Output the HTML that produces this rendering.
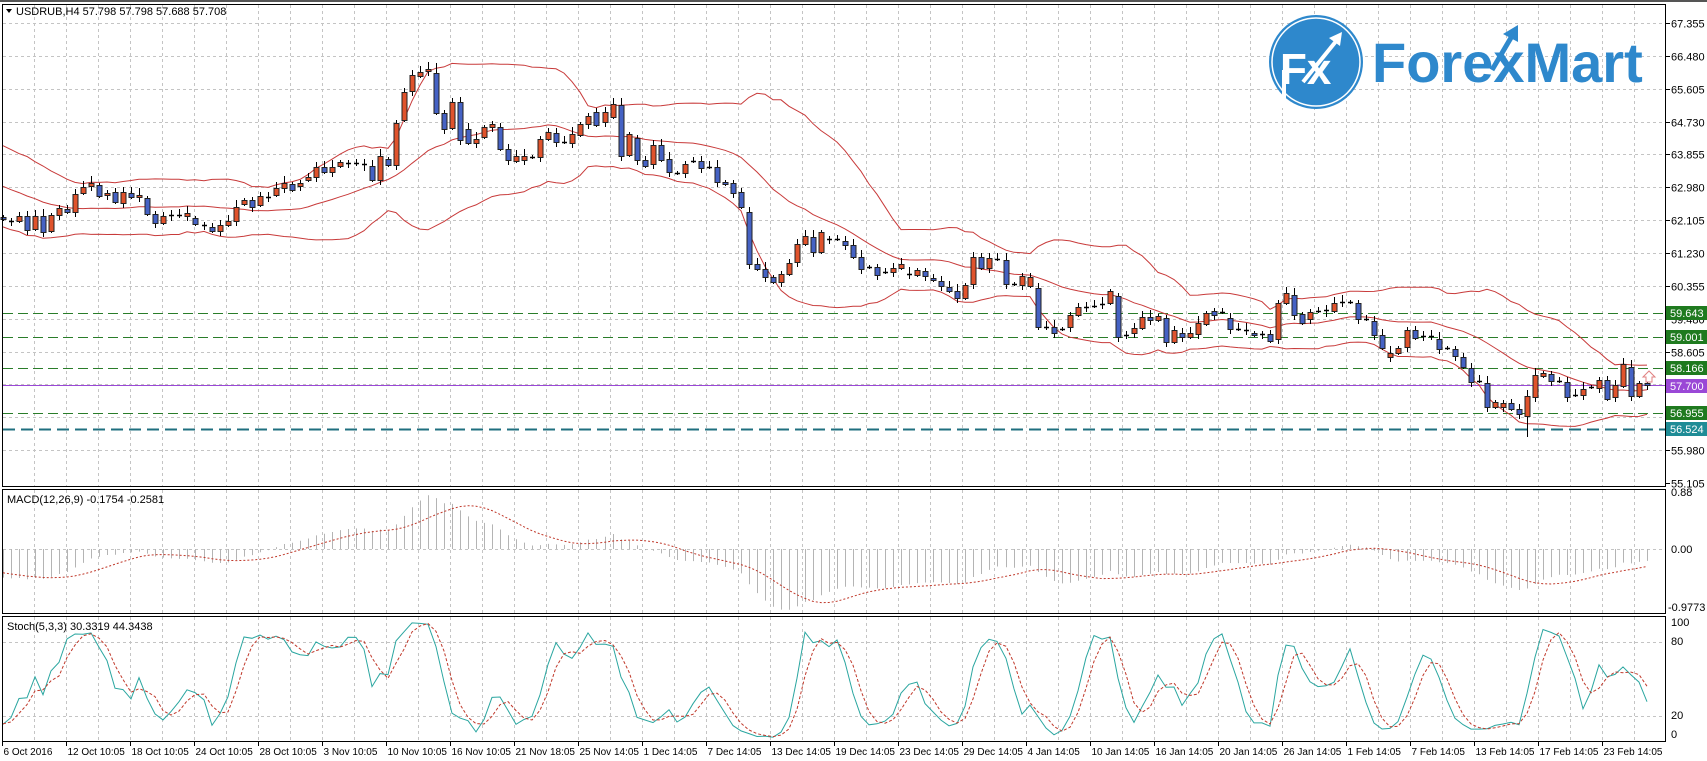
<!DOCTYPE html>
<html><head><meta charset="utf-8">
<style>
html,body{margin:0;padding:0;background:#fff;}
body{width:1707px;height:761px;overflow:hidden;position:relative;font-family:"Liberation Sans",sans-serif;}
svg{position:absolute;left:0;top:0;}
text{font-family:"Liberation Sans",sans-serif;font-size:11px;fill:#000;}
#dates text{font-size:10px;}
</style></head>
<body>
<svg id="s" width="1707" height="761" viewBox="0 0 1707 761" xmlns="http://www.w3.org/2000/svg">
<rect x="0" y="0" width="1707" height="761" fill="#fff"/>
<line x1="0" y1="1" x2="1707" y2="1" stroke="#555" stroke-width="2"/>
<g id="grid" stroke="#c4c4c4" stroke-width="1" stroke-dasharray="3,3"></g>
<g id="levels"></g>
<g id="bands" fill="none" stroke="#c83a3a" stroke-width="1"></g>
<g id="candles"></g>
<g id="macd"></g>
<g id="stoch"></g>
<g fill="none" stroke="#000" stroke-width="1">
<rect x="2.5" y="4.5" width="1663" height="482"/>
<rect x="2.5" y="489.5" width="1663" height="124"/>
<rect x="2.5" y="616.5" width="1663" height="125"/>
</g>
<path d="M6 9 L12 9 L9 13 Z" fill="#000"/>
<text x="16" y="15">USDRUB,H4  57.798 57.798 57.688 57.708</text>
<text x="7" y="503">MACD(12,26,9) -0.1754 -0.2581</text>
<text x="7" y="630">Stoch(5,3,3) 30.3319 44.3438</text>
<g id="axis"></g>
<rect x="1666" y="306" width="41" height="14" fill="#1f7a1f"/>
<text x="1670" y="317" style="fill:#fff">59.643</text>
<rect x="1666" y="330" width="41" height="14" fill="#1f7a1f"/>
<text x="1670" y="341" style="fill:#fff">59.001</text>
<rect x="1666" y="361" width="41" height="14" fill="#1f7a1f"/>
<text x="1670" y="372" style="fill:#fff">58.166</text>
<rect x="1666" y="379" width="41" height="14" fill="#9a48d6"/>
<text x="1670" y="390" style="fill:#fff">57.700</text>
<rect x="1666" y="406" width="41" height="14" fill="#1f7a1f"/>
<text x="1670" y="417" style="fill:#fff">56.955</text>
<rect x="1666" y="422" width="41" height="14" fill="#1f8c96"/>
<text x="1670" y="433" style="fill:#fff">56.524</text>
<path d="M1646 382 L1646 377 L1643 377 L1649 371 L1655 377 L1652 377 L1652 382 Z" fill="#fff" stroke="#e08080" stroke-width="1"/>
<g>
<circle cx="1316" cy="62" r="47" fill="#2e88cc"/>
<circle cx="1316" cy="62" r="44" fill="none" stroke="#fff" stroke-width="1.5"/>
<text x="1280" y="84" style="font-size:44px;font-weight:bold;fill:#fff">Fx</text>
<path d="M1303 82 L1337 40" stroke="#fff" stroke-width="4" fill="none"/>
<path d="M1329 38 L1342 32 L1340 46 Z" fill="#fff"/>
<rect x="1282" y="70" width="4" height="38" fill="#fff"/>
<text x="1372" y="82" style="font-size:56px;font-weight:bold;fill:#2e88cc">ForexMart</text>
<path d="M1492 70 L1512 36" stroke="#2e88cc" stroke-width="5" fill="none"/>
<path d="M1503 34 L1518 25 L1518 42 Z" fill="#2e88cc"/>
</g>
<g id="dates"></g>
</svg>
<script>
(function(){
var NS="http://www.w3.org/2000/svg";
function el(p,t,a){var e=document.createElementNS(NS,t);for(var k in a)e.setAttribute(k,a[k]);p.appendChild(e);return e;}
var g=function(id){return document.getElementById(id);};
var grid=g('grid');
for(var k=1;k<=51;k++){var x=2.5+32*k;
 el(grid,'line',{x1:x,y1:5,x2:x,y2:486});
 el(grid,'line',{x1:x,y1:490,x2:x,y2:613});
 el(grid,'line',{x1:x,y1:617,x2:x,y2:741});}
var plabels=["67.355","66.480","65.605","64.730","63.855","62.980","62.105","61.230","60.355","59.480","58.605","57.730","56.855","55.980","55.105"];
var axis=g('axis');
for(var j=0;j<15;j++){var y=Math.round(23+32.85*j)+0.5;
 if(j<14)el(grid,'line',{x1:3,y1:y,x2:1665,y2:y});
 el(axis,'line',{x1:1666,y1:y,x2:1670,y2:y,stroke:'#000'});
 if(j!=11&&j!=12){var t=el(axis,'text',{x:1671,y:y+4});t.textContent=plabels[j];}}
el(grid,'line',{x1:3,y1:549.5,x2:1665,y2:549.5});
el(grid,'line',{x1:3,y1:642.5,x2:1665,y2:642.5});
el(grid,'line',{x1:3,y1:716.5,x2:1665,y2:716.5});
[["0.88",496],["0.00",553],["-0.9773",611],["100",626],["80",645],["20",719],["0",738]].forEach(function(a){
 var t=el(axis,'text',{x:a[0]=="-0.9773"?1668:1671,y:a[1]});t.textContent=a[0];});
var lv=g('levels');
[313.5,337.5,368.5,413.5].forEach(function(y){el(lv,'line',{x1:3,y1:y,x2:1665,y2:y,stroke:'#2a7d2a','stroke-dasharray':'10,5'});});
el(lv,'line',{x1:3,y1:385.5,x2:1665,y2:385.5,stroke:'#9a48d6'});
el(lv,'line',{x1:3,y1:429.5,x2:1665,y2:429.5,stroke:'#1f6f7f','stroke-width':2,'stroke-dasharray':'12,6'});
var C=[[217,219,'b'],[221,221,'d'],[216,221,'r'],[216,230,'b'],[216,229,'r'],[216,232,'b'],[215,231,'r'],[208,215,'r'],[209,212,'b'],[194,212,'r'],
[187,193,'r'],[183,186,'r'],[185,196,'b'],[193,195,'r'],[192,202,'b'],[192,203,'r'],[193,197,'b'],[195,197,'r'],[198,214,'b'],[214,223,'b'],
[216,223,'r'],[215,216,'d'],[215,216,'d'],[213,216,'r'],[218,224,'b'],[225,225,'d'],[227,231,'b'],[225,231,'r'],[221,225,'r'],[207,221,'r'],
[200,204,'r'],[200,207,'b'],[196,205,'r'],[197,197,'d'],[188,195,'r'],[183,188,'r'],[184,190,'b'],[183,186,'r'],[177,180,'r'],[167,177,'r'],
[167,172,'b'],[167,172,'r'],[162,166,'r'],[163,163,'d'],[163,164,'d'],[164,166,'d'],[166,180,'b'],[156,180,'r'],[159,165,'b'],[123,165,'r'],
[92,120,'r'],[75,91,'r'],[72,76,'r'],[69,71,'r'],[73,113,'b'],[113,129,'b'],[102,128,'r'],[102,140,'b'],[129,143,'b'],[139,143,'r'],
[127,137,'r'],[124,127,'r'],[127,149,'b'],[149,160,'b'],[156,161,'r'],[156,160,'r'],[157,157,'d'],[139,157,'r'],[132,139,'r'],[133,142,'b'],
[142,142,'d'],[134,143,'r'],[124,135,'r'],[116,124,'r'],[112,125,'b'],[112,122,'r'],[104,117,'r'],[105,156,'b'],[134,155,'r'],[138,160,'b'],
[160,166,'b'],[145,164,'r'],[145,160,'b'],[159,172,'b'],[173,173,'d'],[164,173,'r'],[161,161,'d'],[161,168,'b'],[167,167,'d'],[167,182,'b'],
[182,184,'b'],[183,193,'b'],[192,207,'b'],[212,264,'b'],[264,269,'b'],[269,277,'b'],[277,282,'b'],[274,282,'r'],[263,274,'r'],[244,262,'r'],
[236,244,'r'],[237,252,'b'],[232,252,'r'],[239,239,'d'],[239,239,'d'],[241,245,'b'],[245,257,'b'],[257,269,'b'],[267,267,'d'],[267,275,'b'],
[272,272,'d'],[268,272,'r'],[264,268,'r'],[274,274,'d'],[270,275,'r'],[271,276,'b'],[278,280,'b'],[281,286,'b'],[287,291,'b'],[291,298,'b'],
[285,298,'r'],[257,284,'r'],[257,268,'b'],[258,268,'r'],[259,259,'d'],[260,284,'b'],[284,284,'d'],[276,285,'r'],[277,286,'r'],[288,327,'b'],
[327,328,'d'],[327,333,'b'],[329,329,'d'],[315,327,'r'],[307,315,'r'],[307,307,'d'],[306,306,'d'],[304,304,'d'],[291,303,'r'],[296,337,'b'],
[335,337,'d'],[328,333,'r'],[317,328,'r'],[317,320,'b'],[316,320,'r'],[318,342,'b'],[330,342,'r'],[333,337,'b'],[333,337,'r'],[323,334,'r'],
[313,324,'r'],[311,315,'b'],[312,312,'d'],[318,329,'b'],[329,329,'d'],[330,330,'d'],[333,335,'b'],[334,334,'d'],[334,341,'b'],[303,339,'r'],
[293,303,'r'],[295,315,'b'],[314,323,'b'],[312,319,'r'],[311,311,'d'],[310,312,'d'],[303,311,'r'],[302,302,'d'],[302,302,'d'],[303,319,'b'],
[319,319,'d'],[321,335,'b'],[335,348,'b'],[353,357,'r'],[348,353,'r'],[330,347,'r'],[330,338,'b'],[336,336,'d'],[336,338,'d'],[339,349,'b'],
[348,348,'d'],[349,356,'b'],[357,367,'b'],[368,382,'b'],[381,381,'d'],[383,407,'b'],[402,407,'r'],[403,407,'r'],[403,409,'b'],[409,414,'b'],
[396,416,'r'],[375,397,'r'],[373,376,'r'],[374,381,'b'],[381,381,'d'],[382,397,'b'],[395,395,'d'],[389,395,'r'],[387,387,'d'],[380,388,'r'],
[380,399,'b'],[385,397,'r'],[364,386,'r'],[367,396,'b'],[383,396,'r'],[383,385,'b']];
function pr(y){return 67.355-(y-23)/37.54;}
function py(p){return 23+(67.355-p)*37.54;}
var cg=g('candles');var N=C.length;var X=[],CL=[],HI=[],LO=[];
for(var i=0;i<N;i++){
 var c=C[i],x=Math.round(3+8.02*i);X.push(x);
 var hi=c[0]-(2+(i*7)%6),lo=c[1]+(2+(i*3)%6);
 if(i==190)lo=437; if(i==129)lo=330; if(i==159)hi=300; if(i==121)hi=252; if(i==54)hi=63;
 var cl=c[2]=='r'?c[0]:c[1];
 CL.push(pr(cl));HI.push(pr(hi));LO.push(pr(lo));
 el(cg,'line',{x1:x+0.5,y1:hi,x2:x+0.5,y2:lo,stroke:'#000'});
 if(c[2]=='d'||c[1]-c[0]<2){el(cg,'line',{x1:x-2,y1:c[0]+0.5,x2:x+3,y2:c[0]+0.5,stroke:'#000','stroke-width':1.5});}
 else el(cg,'rect',{x:x-2,y:c[0]+0.5,width:5,height:c[1]-c[0],fill:c[2]=='r'?'#e0532c':'#4562c4',stroke:'#222','stroke-width':1});
}
var H=[],HH=[],HL=[];
for(var k=0;k<60;k++){var v=k<40?64.0+0.1*Math.sin(k*0.7):64.0-((k-40)/19)*1.8+0.08*Math.sin(k*1.3);H.push(v);HH.push(v+0.08);HL.push(v-0.08);}
var A=H.concat(CL),AH=HH.concat(HI),AL=HL.concat(LO),O=H.length;
var up=[],md=[],dn=[];
for(var i=0;i<N;i++){var s=0,ss=0,n=20;for(var k=0;k<n;k++){var v=A[O+i-k];s+=v;}var m=s/n;
 for(var k=0;k<n;k++){var d=A[O+i-k]-m;ss+=d*d;}var sd=Math.sqrt(ss/n);
 up.push(X[i]+','+py(m+2*sd).toFixed(1));md.push(X[i]+','+py(m).toFixed(1));dn.push(X[i]+','+py(m-2*sd).toFixed(1));}
var bg=g('bands');
[up,md,dn].forEach(function(p){el(bg,'polyline',{points:p.join(' ')});});
var e12=A[0],e26=A[0],M=[];
for(var i=0;i<A.length;i++){e12+=(A[i]-e12)*2/13;e26+=(A[i]-e26)*2/27;M.push(e12-e26);}
var mg=g('macd'),sp=[];
function my(v){var y=549-v*67.5;return Math.max(491,Math.min(612,y));}
for(var i=0;i<N;i++){var v=M[O+i];el(mg,'line',{x1:X[i]+0.5,y1:549,x2:X[i]+0.5,y2:my(v),stroke:'#b4b4b4'});
 var s=0;for(var k=0;k<9;k++)s+=M[O+i-k];sp.push(X[i]+','+my(s/9).toFixed(1));}
el(mg,'polyline',{points:sp.join(' '),fill:'none',stroke:'#c0392b','stroke-dasharray':'2,2'});
var K=[];
for(var i=10;i<A.length;i++){var num=0,den=0;for(var j=0;j<3;j++){var t=i-j,ll=1e9,hh=-1e9;for(var q=0;q<5;q++){ll=Math.min(ll,AL[t-q]);hh=Math.max(hh,AH[t-q]);}num+=A[t]-ll;den+=hh-ll;}
 K[i]=den>0?100*num/den:50;}
var kp=[],dp=[];function sy(v){return 741-v*1.235;}
for(var i=0;i<N;i++){var t=O+i;kp.push(X[i]+','+sy(K[t]).toFixed(1));dp.push(X[i]+','+sy((K[t]+K[t-1]+K[t-2])/3).toFixed(1));}
var sg=g('stoch');
el(sg,'polyline',{points:kp.join(' '),fill:'none',stroke:'#2aa6a0'});
el(sg,'polyline',{points:dp.join(' '),fill:'none',stroke:'#c0392b','stroke-dasharray':'3,2'});
var D=["6 Oct 2016","12 Oct 10:05","18 Oct 10:05","24 Oct 10:05","28 Oct 10:05","3 Nov 10:05","10 Nov 10:05","16 Nov 10:05","21 Nov 18:05","25 Nov 14:05","1 Dec 14:05","7 Dec 14:05","13 Dec 14:05","19 Dec 14:05","23 Dec 14:05","29 Dec 14:05","4 Jan 14:05","10 Jan 14:05","16 Jan 14:05","20 Jan 14:05","26 Jan 14:05","1 Feb 14:05","7 Feb 14:05","13 Feb 14:05","17 Feb 14:05","23 Feb 14:05"];
var dg=g('dates');
for(var i=0;i<D.length;i++){var x=2.5+64*i;el(dg,'line',{x1:x,y1:742,x2:x,y2:746,stroke:'#000'});var t=el(dg,'text',{x:x+1,y:755});t.textContent=D[i];}
})();
</script>
</body></html>
